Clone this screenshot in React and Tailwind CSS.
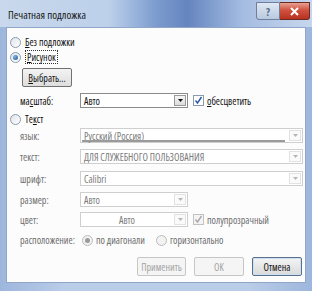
import React from "react";

const Radio = ({ checked, disabled }) => (
  <span
    className={`flex h-[11px] w-[11px] shrink-0 items-center justify-center rounded-full border ${
      disabled ? "border-[#bcbcbc] bg-[#f2f2f2]" : "border-[#8a9bb0] bg-[linear-gradient(135deg,#dfe3e9,#ffffff)]"
    }`}
  >
    {checked && (
      <span
        className={`h-[5px] w-[5px] rounded-full ${
          disabled ? "bg-[#9a9a9a]" : "bg-[radial-gradient(circle_at_35%_35%,#7fb4e6,#1b4f8c)]"
        }`}
      />
    )}
  </span>
);

const Check = ({ disabled }) => (
  <span
    className={`flex h-[11px] w-[11px] shrink-0 items-center justify-center border ${
      disabled ? "border-[#c2c2c2] bg-[#f4f4f4]" : "border-[#8a9bb0] bg-white"
    }`}
  >
    <svg width="9" height="9" viewBox="0 0 9 9">
      <path d="M1.5 4.5 L3.5 7 L7.5 1" fill="none" stroke={disabled ? "#a8a8a8" : "#2a57a8"} strokeWidth="1.4" />
    </svg>
  </span>
);

const Combo = ({ value, className, disabled, center, underline }) => (
  <div
    className={`flex h-full items-stretch border bg-white ${
      disabled ? "border-[#cfcfcf]" : "border-[#8c8c8c]"
    } ${className}`}
  >
    <div
      className={`relative flex flex-1 items-center px-[3px] ${center ? "justify-center" : ""} ${
        disabled ? "text-[#7c7c7c]" : "text-[#111]"
      }`}
    >
      {value}
      {underline && <span className="absolute bottom-[0px] left-[1px] right-[3px] h-[2px] bg-[#9a9a9a]" />}
    </div>
    <div
      className={`m-[1px] flex w-[12px] items-center justify-center border ${
        disabled ? "border-[#e2e2e2] bg-[#fafafa]" : "border-[#9a9a9a] bg-[linear-gradient(#f6f6f6,#dcdcdc)]"
      }`}
    >
      <svg width="5" height="3" viewBox="0 0 5 3">
        <path d="M0 0 H5 L2.5 3 Z" fill={disabled ? "#b5b5b5" : "#111"} />
      </svg>
    </div>
  </div>
);

const Row = ({ label, children, className, dim }) => (
  <div className={`flex h-[15px] items-center ${className}`}>
    <span className={`w-[73px] pl-[13px] ${dim ? "text-[#6e6e6e]" : "text-[#111]"}`}>{label}</span>
    <div className="flex h-full items-center gap-[5px]">{children}</div>
  </div>
);

const App = () => {
  return (
    <div className="flex h-[291px] w-[312px] flex-col overflow-hidden bg-[linear-gradient(to_right,#9db6dc,#b9cce8_20%,#b9cce8_80%,#9db6dc)] font-['Open_Sans',sans-serif] text-[10px] leading-none text-[#111] font-stretch-condensed">
      {/* title bar */}
      <div className="flex h-[27px] shrink-0 items-start justify-between bg-[linear-gradient(to_right,#c9d8ec,#bcd0ea_35%,#7c9ccf_50%,#6585bf_60%,#a5bde2_78%,#c6d6ed)]">
        <span className="pl-[8px] pt-[9px] text-[11px] text-[#1a1a1a]">Печатная подложка</span>
        <div className="mr-[2px] mt-[2px] flex">
          <div className="flex h-[18px] w-[24px] items-center justify-center rounded-bl-[3px] border border-[#6f7f99] bg-[linear-gradient(#dfe8f4,#b9c9df)] text-[11px] font-bold text-[#5a6b86]">
            ?
          </div>
          <div className="flex h-[18px] w-[30px] items-center justify-center rounded-br-[3px] border border-l-0 border-[#6b2a22] bg-[linear-gradient(#e8a192,#d0513f_45%,#b8321f)]">
            <svg width="9" height="9" viewBox="0 0 9 9">
              <path d="M1 1 L8 8 M8 1 L1 8" stroke="#fff" strokeWidth="2" />
            </svg>
          </div>
        </div>
      </div>

      {/* content */}
      <div className="mx-[6px] flex h-[256px] flex-col border border-[#8fa6c8] bg-[#fcfcfc]">
        <div className="mt-[7px] flex h-[14px] items-center gap-[4px] pl-[3px]">
          <Radio />
          <span>
            <u>Б</u>ез подложки
          </span>
        </div>
        <div className="mt-[1px] flex h-[14px] items-center gap-[4px] pl-[3px]">
          <Radio checked />
          <span className="border border-dotted border-[#333] px-[1px] py-[1px]">
            <u>Р</u>исунок
          </span>
        </div>
        <div className="ml-[15px] mt-[4px] flex h-[19px] w-[50px] items-center justify-center rounded-[2px] border border-[#707070] bg-[linear-gradient(#f3f3f3,#dedede)]">
          <span>
            <u>В</u>ыбрать...
          </span>
        </div>
        <Row label={<>ма<u>с</u>штаб:</>} className="mt-[6px]">
          <Combo value="Авто" className="w-[108px]" />
          <div className="flex items-center gap-[3px]">
            <Check />
            <span>
              <u>о</u>бесцветить
            </span>
          </div>
        </Row>
        <div className="mt-[4px] flex h-[14px] items-center gap-[4px] pl-[3px]">
          <Radio />
          <span>
            Те<u>к</u>ст
          </span>
        </div>
        <Row label="язык:" dim className="mt-[2px]">
          <Combo value="Русский (Россия)" className="w-[223px]" disabled underline />
        </Row>
        <Row label="текст:" dim className="mt-[6px]">
          <Combo value="ДЛЯ СЛУЖЕБНОГО ПОЛЬЗОВАНИЯ" className="w-[223px]" disabled />
        </Row>
        <Row label="шрифт:" dim className="mt-[7px]">
          <Combo value="Calibri" className="w-[223px]" disabled />
        </Row>
        <Row label="размер:" dim className="mt-[6px]">
          <Combo value="Авто" className="w-[108px]" disabled />
        </Row>
        <Row label="цвет:" dim className="mt-[5px]">
          <Combo value="Авто" className="w-[108px]" disabled center />
          <div className="flex items-center gap-[3px] text-[#6e6e6e]">
            <Check disabled />
            <span>полупрозрачный</span>
          </div>
        </Row>
        <div className="mt-[6px] flex h-[14px] items-center text-[#6e6e6e]">
          <span className="w-[75px] pl-[13px]">расположение:</span>
          <div className="flex items-center gap-[3px]">
            <Radio checked disabled />
            <span>по диагонали</span>
          </div>
          <div className="ml-[11px] flex items-center gap-[3px]">
            <Radio disabled />
            <span>горизонтально</span>
          </div>
        </div>
        <div className="mt-[10px] flex h-[19px] justify-end gap-[8px] pr-[3px]">
          <div className="flex w-[49px] items-center justify-center rounded-[2px] border border-[#c6c6c6] bg-[#f5f5f5] text-[#a3a3a3]">
            Применить
          </div>
          <div className="flex w-[50px] items-center justify-center rounded-[2px] border border-[#c6c6c6] bg-[#f5f5f5] text-[#a3a3a3]">
            ОК
          </div>
          <div className="flex w-[50px] items-center justify-center rounded-[2px] border border-[#5c6f8c] bg-[linear-gradient(#f4f4f4,#dadada)] text-[#111] shadow-[inset_0_0_0_1px_#c9e0f5]">
            Отмена
          </div>
        </div>
      </div>
    </div>
  );
};

export default App;
